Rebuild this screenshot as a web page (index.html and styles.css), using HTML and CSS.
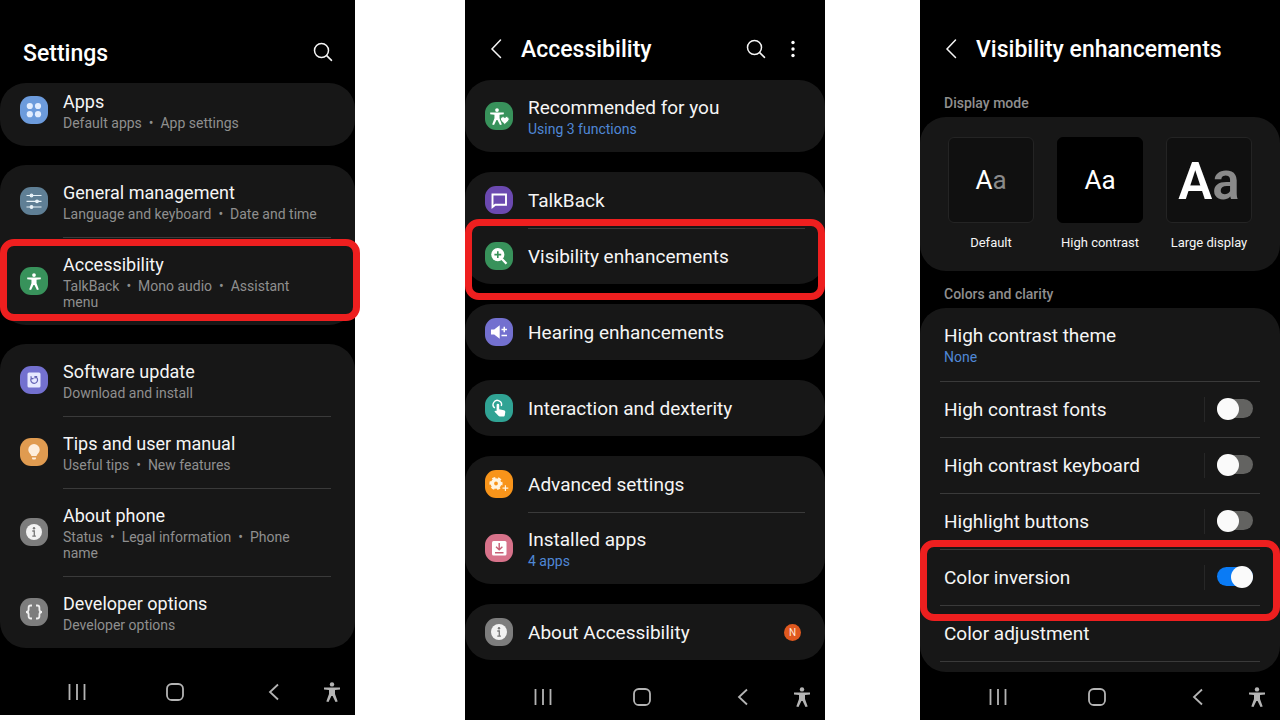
FILE: index.html
```html
<!DOCTYPE html>
<html lang="en">
<head>
    <meta charset="UTF-8">
    <meta name="viewport" content="width=device-width, initial-scale=1.0">
    <title>Color inversion settings</title>
    <link rel="stylesheet" href="styles.css">
</head>
<body>

    <!-- Shared icons -->
    <svg class="sprite" aria-hidden="true">
        <symbol id="search" viewBox="0 0 24 24">
            <circle cx="10.5" cy="10.5" r="7" fill="none" stroke="currentColor" stroke-width="1.5"/>
            <path d="M15.7 15.7L20.5 20.3" fill="none" stroke="currentColor" stroke-width="1.6" stroke-linecap="round"/>
        </symbol>
        <symbol id="chevron" viewBox="0 0 24 24">
            <path d="M16.500 3L8 12L16.500 20.500" fill="none" stroke="currentColor" stroke-width="1.5" stroke-linecap="round"/>
        </symbol>
        <symbol id="recents" viewBox="0 0 20 20">
            <path d="M2.500 2v16M10 2v16M17.500 2v16" fill="none" stroke="currentColor" stroke-width="1.8"/>
        </symbol>
        <symbol id="home" viewBox="0 0 20 20">
            <rect x="2" y="2" width="16" height="16" rx="4.800" fill="none" stroke="currentColor" stroke-width="1.8"/>
        </symbol>
        <symbol id="back" viewBox="0 0 20 20">
            <path d="M15 2.500L7 10L15 17.500" fill="none" stroke="currentColor" stroke-width="1.8"/>
        </symbol>
        <symbol id="person" viewBox="0 0 20 20">
            <circle cx="10" cy="2.400" r="2.200" fill="currentColor"/>
            <path d="M2 5.400h16v2l-5 .6v4l2.700 7.400-2.200.6L10.600 14h-1.200L6.500 20l-2.200-.6L7 12V8l-5-.6z" fill="currentColor"/>
        </symbol>
        <symbol id="info" viewBox="0 0 28 28">
            <circle cx="14" cy="14" r="8" fill="#f2f2f2"/>
            <circle cx="14" cy="10.300" r="1.200" fill="#777"/>
            <path d="M12.300 13h2v5M12.300 18.200h3.600" fill="none" stroke="#777" stroke-width="1.300"/>
        </symbol>
    </svg>

    <main class="screens">

        <!-- Settings -->
        <section class="phone phone-settings">
            <header class="bar bar-main">
                <h1>Settings</h1>
                <button class="icon-btn" aria-label="Search"><svg><use href="#search"/></svg></button>
            </header>

            <div class="card card-scrolled">
                <a class="row" href="#">
                    <span class="icon blue"><svg viewBox="0 0 28 28" fill="#e2edff"><circle cx="9.800" cy="10" r="3.100"/><circle cx="18" cy="10" r="3.100"/><circle cx="9.800" cy="18.200" r="3.100"/><circle cx="18" cy="18.200" r="3.100"/></svg></span>
                    <span class="text"><span class="title">Apps</span><span class="sub">Default apps &nbsp;•&nbsp; App settings</span></span>
                </a>
            </div>

            <div class="card">
                <a class="row" href="#">
                    <span class="icon slate"><svg viewBox="0 0 28 28" stroke="#e6f1f7" stroke-width="1.200" fill="#e6f1f7"><path d="M6.500 8.500h15M6.500 14.300h15M6.500 20h15"/><circle cx="11.500" cy="8.500" r="1.300"/><circle cx="17" cy="14.300" r="1.300"/><circle cx="11.500" cy="20" r="1.300"/></svg></span>
                    <span class="text"><span class="title">General management</span><span class="sub">Language and keyboard &nbsp;•&nbsp; Date and time</span></span>
                </a>
                <a class="row marked" href="#">
                    <span class="icon green"><svg viewBox="0 0 28 28"><use href="#person" x="5.500" y="5.500" width="17" height="18"/></svg></span>
                    <span class="text"><span class="title">Accessibility</span><span class="sub">TalkBack &nbsp;•&nbsp; Mono audio &nbsp;•&nbsp; Assistant menu</span></span>
                </a>
            </div>

            <div class="card">
                <a class="row" href="#">
                    <span class="icon violet"><svg viewBox="0 0 28 28"><rect x="7.500" y="6.500" width="13" height="15" rx="1.500" fill="#e6e8ff"/><path d="M11.500 11.800a3.400 3.400 0 1 0 4-1M11 10.300l.3 2.600 2.300-.6M17.200 10.500h-2.200v2" fill="none" stroke="#6563b5" stroke-width="1.200"/></svg></span>
                    <span class="text"><span class="title">Software update</span><span class="sub">Download and install</span></span>
                </a>
                <a class="row" href="#">
                    <span class="icon amber"><svg viewBox="0 0 28 28" fill="#fdeedd"><path d="M14 6a5.700 5.700 0 0 0-5.700 5.700c0 2.300 1.400 3.500 2.400 4.700.5.700.6 1.600 1.100 1.600h4.400c.5 0 .6-.9 1.100-1.600 1-1.200 2.400-2.400 2.400-4.700A5.700 5.700 0 0 0 14 6z"/><path d="M12 19.600h4v.7a1.300 1.300 0 0 1-1.300 1.300h-1.400a1.300 1.300 0 0 1-1.300-1.300z"/></svg></span>
                    <span class="text"><span class="title">Tips and user manual</span><span class="sub">Useful tips &nbsp;•&nbsp; New features</span></span>
                </a>
                <a class="row" href="#">
                    <span class="icon gray"><svg><use href="#info"/></svg></span>
                    <span class="text"><span class="title">About phone</span><span class="sub">Status &nbsp;•&nbsp; Legal information &nbsp;•&nbsp; Phone name</span></span>
                </a>
                <a class="row" href="#">
                    <span class="icon gray"><svg viewBox="0 0 28 28" fill="none" stroke="#f0f0f0" stroke-width="1.800"><path d="M12 7.500h-1.200c-1.500 0-2.200.7-2.200 2.200v1.800c0 1.500-.8 2.500-2.600 2.500 1.800 0 2.600 1 2.600 2.500v1.800c0 1.500.7 2.200 2.200 2.200H12M16 7.500h1.200c1.500 0 2.200.7 2.200 2.200v1.800c0 1.500.8 2.500 2.600 2.500-1.800 0-2.600 1-2.600 2.500v1.800c0 1.500-.7 2.200-2.200 2.200H16"/></svg></span>
                    <span class="text"><span class="title">Developer options</span><span class="sub">Developer options</span></span>
                </a>
            </div>

            <nav class="nav">
                <button aria-label="Recents"><svg><use href="#recents"/></svg></button>
                <button aria-label="Home"><svg><use href="#home"/></svg></button>
                <button aria-label="Back"><svg><use href="#back"/></svg></button>
                <button aria-label="Accessibility"><svg><use href="#person"/></svg></button>
            </nav>
        </section>

        <!-- Accessibility -->
        <section class="phone phone-access">
            <header class="bar">
                <button class="icon-btn" aria-label="Back"><svg><use href="#chevron"/></svg></button>
                <h1>Accessibility</h1>
                <button class="icon-btn" aria-label="Search"><svg><use href="#search"/></svg></button>
                <button class="icon-btn" aria-label="More options"><svg viewBox="0 0 24 24" fill="#fff"><circle cx="12" cy="5.500" r="1.700"/><circle cx="12" cy="12" r="1.700"/><circle cx="12" cy="18.500" r="1.700"/></svg></button>
            </header>

            <div class="card">
                <a class="row" href="#">
                    <span class="icon green"><svg viewBox="0 0 28 28"><use href="#person" x="3.500" y="5.500" width="17" height="18"/><path d="M19.800 22.500l-3.700-3.600a2.500 2.500 0 0 1 3.700-3.400 2.500 2.500 0 0 1 3.700 3.400z" fill="#fff" stroke="#38925b" stroke-width="1"/></svg></span>
                    <span class="text"><span class="title">Recommended for you</span><span class="sub link">Using 3 functions</span></span>
                </a>
            </div>

            <div class="card">
                <a class="row" href="#">
                    <span class="icon purple"><svg viewBox="0 0 28 28"><path d="M7.500 8.500h13.500v10.200h-10.700l-2.800 2.300z" fill="none" stroke="#fff" stroke-width="1.900"/></svg></span>
                    <span class="text"><span class="title">TalkBack</span></span>
                </a>
                <a class="row marked" href="#">
                    <span class="icon green"><svg viewBox="0 0 28 28"><circle cx="12.800" cy="12.600" r="6.600" fill="#fff"/><path d="M17 17l4.500 4.800" stroke="#fff" stroke-width="2.300"/><path d="M12.800 9.200v6.800M9.400 12.600h6.800" stroke="#38925b" stroke-width="1.600"/></svg></span>
                    <span class="text"><span class="title">Visibility enhancements</span></span>
                </a>
            </div>

            <div class="card">
                <a class="row" href="#">
                    <span class="icon violet"><svg viewBox="0 0 28 28"><path d="M6 11.500h3.200l5.500-4.300v13.600l-5.500-4.300H6z" fill="#fff"/><path d="M16.500 11.500h5.500M19.250 8.800v5.400M16.500 17.500h5.500" stroke="#fff" stroke-width="1.500"/></svg></span>
                    <span class="text"><span class="title">Hearing enhancements</span></span>
                </a>
            </div>

            <div class="card">
                <a class="row" href="#">
                    <span class="icon teal"><svg viewBox="0 0 28 28"><path d="M9.800 14a4.200 4.200 0 1 1 6.500-2" fill="none" stroke="#fff" stroke-width="1.400"/><path d="M11.600 11a1.300 1.300 0 0 1 2.600 0v4.200l4.700 1c1 .2 1.500.9 1.400 1.800l-.5 3.200c-.1.800-.7 1.300-1.500 1.300h-3.400c-.6 0-1.100-.2-1.500-.7l-4-4.300c.7-1 1.500-1 2.200-.5z" fill="#fff"/></svg></span>
                    <span class="text"><span class="title">Interaction and dexterity</span></span>
                </a>
            </div>

            <div class="card">
                <a class="row" href="#">
                    <span class="icon orange"><svg viewBox="0 0 28 28"><circle cx="11" cy="13.500" r="3.600" fill="none" stroke="#fff3df" stroke-width="3.400"/><circle cx="11" cy="13.500" r="5.600" fill="none" stroke="#fff3df" stroke-width="2" stroke-dasharray="3.200 2.660" transform="rotate(-16 11 13.500)"/><path d="M17.500 18.200h5.800M20.400 15.300v5.800" stroke="#fff3df" stroke-width="1.200"/></svg></span>
                    <span class="text"><span class="title">Advanced settings</span></span>
                </a>
                <a class="row" href="#">
                    <span class="icon pink"><svg viewBox="0 0 28 28"><rect x="7" y="7" width="14.500" height="14.500" rx="1.500" fill="#fff"/><path d="M14.200 9v6.500M11 12.800l3.200 3 3.200-3M10 18.700h8.500" fill="none" stroke="#c65f75" stroke-width="1.400"/></svg></span>
                    <span class="text"><span class="title">Installed apps</span><span class="sub link">4 apps</span></span>
                </a>
            </div>

            <div class="card">
                <a class="row" href="#">
                    <span class="icon gray"><svg><use href="#info"/></svg></span>
                    <span class="text"><span class="title">About Accessibility</span></span>
                    <span class="badge">N</span>
                </a>
            </div>

            <nav class="nav">
                <button aria-label="Recents"><svg><use href="#recents"/></svg></button>
                <button aria-label="Home"><svg><use href="#home"/></svg></button>
                <button aria-label="Back"><svg><use href="#back"/></svg></button>
                <button aria-label="Accessibility"><svg><use href="#person"/></svg></button>
            </nav>
        </section>

        <!-- Visibility enhancements -->
        <section class="phone phone-visibility">
            <header class="bar">
                <button class="icon-btn" aria-label="Back"><svg><use href="#chevron"/></svg></button>
                <h1>Visibility enhancements</h1>
            </header>

            <h2>Display mode</h2>
            <div class="card modes">
                <button class="mode"><span class="tile">A<b>a</b></span>Default</button>
                <button class="mode"><span class="tile tile-contrast">Aa</span>High contrast</button>
                <button class="mode"><span class="tile tile-large">A<b>a</b></span>Large display</button>
            </div>

            <h2>Colors and clarity</h2>
            <div class="card options">
                <a class="option option-tall" href="#"><span><span class="title">High contrast theme</span><span class="sub link">None</span></span></a>
                <div class="option">
                    <label class="title" for="fonts">High contrast fonts</label>
                    <span class="toggle"><input type="checkbox" class="switch" id="fonts"></span>
                </div>
                <div class="option">
                    <label class="title" for="keyboard">High contrast keyboard</label>
                    <span class="toggle"><input type="checkbox" class="switch" id="keyboard"></span>
                </div>
                <div class="option">
                    <label class="title" for="buttons">Highlight buttons</label>
                    <span class="toggle"><input type="checkbox" class="switch" id="buttons"></span>
                </div>
                <div class="option marked">
                    <label class="title" for="inversion">Color inversion</label>
                    <span class="toggle"><input type="checkbox" class="switch" id="inversion" checked></span>
                </div>
                <a class="option" href="#"><span class="title">Color adjustment</span></a>
            </div>

            <nav class="nav">
                <button aria-label="Recents"><svg><use href="#recents"/></svg></button>
                <button aria-label="Home"><svg><use href="#home"/></svg></button>
                <button aria-label="Back"><svg><use href="#back"/></svg></button>
                <button aria-label="Accessibility"><svg><use href="#person"/></svg></button>
            </nav>
        </section>

    </main>

</body>
</html>
```
FILE: styles.css
```css
* {
    box-sizing: border-box;
}
body {
    margin: 0;
    background-color: #fff;
    color: #f5f5f5;
    font-family: Roboto, "Liberation Sans", sans-serif;
}
a {
    color: inherit;
    text-decoration: none;
}
button {
    padding: 0;
    border: none;
    background: none;
    color: inherit;
    font-family: inherit;
    cursor: pointer;
}
.sprite {
    display: none;
}
.screens {
    display: grid;
    grid-template-columns: 71fr 22fr 72fr 19fr 72fr;
    min-height: 100vh;
}
.phone {
    display: flex;
    flex-direction: column;
    background-color: #000;
}
.phone-settings {
    grid-column: 1;
    margin-bottom: 5px;
}
.phone-access {
    grid-column: 3;
}
.phone-visibility {
    grid-column: 5;
}

/* Title bar */
.bar {
    display: flex;
    align-items: center;
    gap: 13px;
    height: 80px;
    padding: 17px 20px 0 19px;
}
.bar-main {
    height: 83px;
    padding: 21px 20px 0 23px;
}
h1 {
    flex: 1;
    margin: 0;
    padding-top: 2px;
    color: #fff;
    font-size: 23px;
    font-weight: 500;
    white-space: nowrap;
}
.icon-btn, .icon-btn svg {
    display: block;
    width: 24px;
    height: 24px;
}
h2 {
    margin: 0;
    padding: 14px 24px 5px;
    color: #8f8f8f;
    font-size: 14px;
    font-weight: 500;
    line-height: 18px;
}

/* Lists */
.card {
    border-radius: 26px;
    background-color: #171717;
}
.card + .card {
    margin-top: 20px;
}
.phone-settings .card + .card {
    margin-top: 19px;
}
.row {
    display: flex;
    align-items: center;
    gap: 15px;
    position: relative;
    padding: 0 20px;
}
.phone-settings .row {
    padding-right: 24px;
}
.text {
    flex: 1;
    padding: 16px 0 15px;
}
.row + .row .text {
    padding-top: 15px;
    border-top: 1px solid #3a3a3a;
}
.card-scrolled .text {
    padding-top: 7px;
}
.card-scrolled .icon {
    margin-bottom: 9px;
}
.title {
    display: block;
    font-size: 19px;
    line-height: 24px;
}
.phone-settings .title {
    font-size: 18px;
}
.text .title:only-child {
    padding-top: 1px;
}
.sub {
    display: block;
    margin-top: 1px;
    color: #8f8f8f;
    font-size: 14px;
    line-height: 16px;
}
.phone-settings .sub {
    padding-right: 10px;
}
.link {
    color: #4f87d6;
}
.icon {
    width: 28px;
    height: 28px;
    border-radius: 11px;
    color: #fff;
}
.icon svg {
    display: block;
    width: 28px;
    height: 28px;
}
.blue { background-color: #6c9bdc; }
.slate { background-color: #5f7f95; }
.green { background-color: #38925b; }
.violet { background-color: #7370cf; }
.amber { background-color: #e09b50; }
.gray { background-color: #7d7d7d; }
.purple { background-color: #6b49b0; }
.teal { background-color: #30a394; }
.orange { background-color: #f8941a; }
.pink { background-color: #d7728a; }
.badge {
    width: 17px;
    margin-right: 4px;
    border-radius: 50%;
    background-color: #e0591f;
    color: #ffe9dd;
    font-size: 10px;
    line-height: 17px;
    text-align: center;
}

/* Red frame drawn over the row */
.marked::after {
    content: "";
    position: absolute;
    inset: -9px 0 -16px;
    border: 7px solid #ee1f1f;
    border-radius: 14px;
    pointer-events: none;
}
.phone-settings .marked::after {
    inset: 2px -5px 4px 0;
}

/* Display modes */
.modes {
    display: grid;
    grid-template-columns: repeat(3, 1fr);
    gap: 23px;
    padding: 20px 28px 20px;
}
.mode {
    font-size: 13px;
    line-height: 16px;
    white-space: nowrap;
}
.tile {
    display: flex;
    align-items: center;
    justify-content: center;
    aspect-ratio: 1;
    margin-bottom: 12px;
    border: 1px solid #242424;
    border-radius: 6px;
    background-color: #101010;
    color: #fff;
    font-size: 26px;
}
.tile b {
    color: #8a8a8a;
    font-weight: inherit;
}
.tile-contrast {
    border-color: #000;
    background-color: #000;
}
.tile-large {
    padding-top: 4px;
    font-size: 51px;
    font-weight: 600;
}

/* Options with switches */
.options {
    padding: 0 20px 10px;
}
.option {
    display: flex;
    align-items: center;
    justify-content: space-between;
    position: relative;
    height: 56px;
    padding: 0 7px 0 4px;
    border-top: 1px solid #3a3a3a;
}
.option-tall {
    height: 73px;
    border-top: none;
}
.option:last-child {
    height: 57px;
    border-bottom: 1px solid #3a3a3a;
}
.options .marked::after {
    inset: -10px -20px -16px;
}
.toggle {
    padding: 2px 0 4px 12px;
    border-left: 1px solid #272727;
}
.switch {
    display: flex;
    align-items: center;
    appearance: none;
    width: 36px;
    height: 19px;
    margin: 0;
    border-radius: 10px;
    background-color: #636361;
    cursor: pointer;
}
.switch::before {
    content: "";
    flex: none;
    width: 22px;
    height: 22px;
    border-radius: 50%;
    background-color: #fafafa;
}
.switch:checked {
    justify-content: flex-end;
    background-color: #0a7bf5;
}

/* Navigation bar */
.nav {
    display: grid;
    grid-template-columns: 100fr 100fr 100fr 18fr;
    align-items: center;
    height: 46px;
    margin-top: auto;
    padding: 0 13px 0 28px;
    color: #b4b4b4;
}
.nav svg {
    display: block;
    width: 20px;
    height: 20px;
    margin: 0 auto;
}
```
